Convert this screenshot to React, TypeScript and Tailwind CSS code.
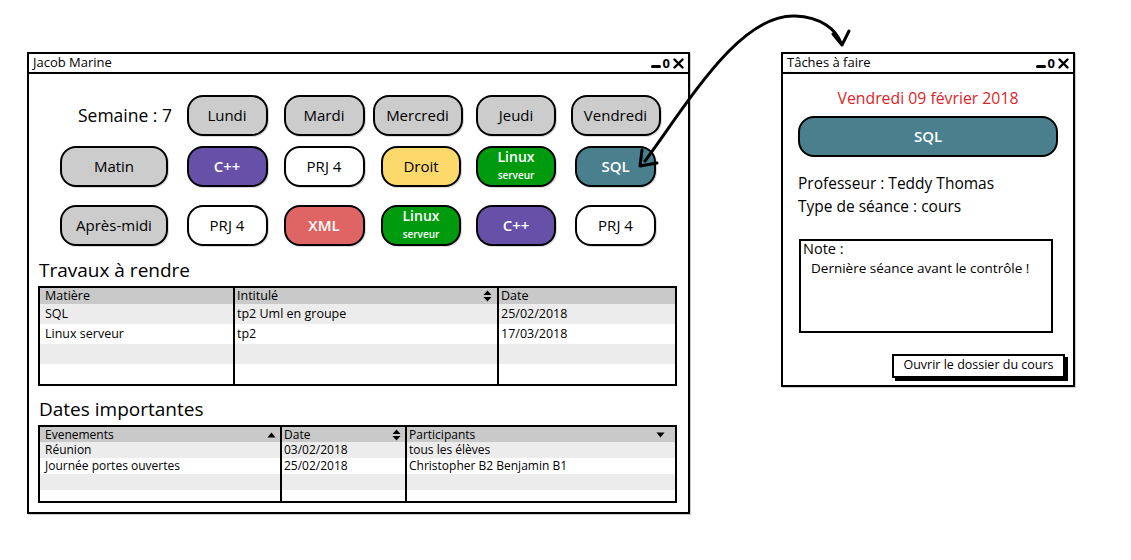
import React from "react";

const font = { fontFamily: "'Open Sans', 'Noto Sans', 'Liberation Sans', sans-serif" };

function WinControls() {
  return (
    <div className="flex items-end gap-[2px] pr-[4px] leading-none">
      <span className="block w-[10px] h-[3px] bg-black mb-[2px] rounded-sm" />
      <span className="text-[13px] font-bold">0</span>
      <svg width="11" height="11" viewBox="0 0 11 11" className="mb-[1px] ml-[1px]">
        <path d="M1.5 1.5 L9.5 9.5 M9.5 1.5 L1.5 9.5" stroke="black" strokeWidth="2.4" strokeLinecap="round" />
      </svg>
    </div>
  );
}

function Btn({ className, children }: { className: string; children: React.ReactNode }) {
  return (
    <div
      className={
        "h-[41px] rounded-[16px] border-2 border-black flex flex-col items-center justify-center leading-none shadow-[1px_1px_0_rgba(0,0,0,0.15)] " +
        className
      }
    >
      {children}
    </div>
  );
}

function Linux() {
  return (
    <Btn className="w-[80px] bg-[#009a0e] text-white">
      <span className="text-[14px] font-semibold -mt-[4px]">Linux</span>
      <span className="text-[10px] font-semibold mt-[6px]">serveur</span>
    </Btn>
  );
}

function Grid() {
  return (
    <div className="grid grid-cols-[110px_80px_80px_80px_80px_81px] gap-x-[17px] justify-items-center text-[15px]">
      {/* row 1 */}
      <div className="justify-self-stretch h-[41px] flex items-center justify-end text-[17.5px] -mr-[2px]">Semaine : 7</div>
      <Btn className="w-[81px] bg-[#cccccc]">Lundi</Btn>
      <Btn className="w-[81px] bg-[#cccccc]">Mardi</Btn>
      <Btn className="w-[90px] bg-[#cccccc] -ml-[7px]">Mercredi</Btn>
      <Btn className="w-[80px] bg-[#cccccc] -ml-[4px]">Jeudi</Btn>
      <Btn className="w-[90px] bg-[#cccccc]">Vendredi</Btn>
      {/* row 2 */}
      <div className="justify-self-start mt-[10px]"><Btn className="w-[108px] bg-[#cccccc]">Matin</Btn></div>
      <div className="mt-[10px]"><Btn className="w-[81px] bg-[#6750a8] text-white font-semibold">C++</Btn></div>
      <div className="mt-[10px]"><Btn className="w-[81px] bg-white">PRJ 4</Btn></div>
      <div className="mt-[10px]"><Btn className="w-[80px] bg-[#fdd86b]">Droit</Btn></div>
      <div className="mt-[10px] -ml-[4px]"><Linux /></div>
      <div className="mt-[10px]"><Btn className="w-[81px] bg-[#4a808e] text-white font-semibold">SQL</Btn></div>
      {/* row 3 */}
      <div className="justify-self-start mt-[18px]"><Btn className="w-[108px] bg-[#cccccc]">Après-midi</Btn></div>
      <div className="mt-[18px]"><Btn className="w-[81px] bg-white">PRJ 4</Btn></div>
      <div className="mt-[18px]"><Btn className="w-[81px] bg-[#df6565] text-white font-semibold">XML</Btn></div>
      <div className="mt-[18px]"><Linux /></div>
      <div className="mt-[18px] -ml-[4px]"><Btn className="w-[80px] bg-[#6750a8] text-white font-semibold">C++</Btn></div>
      <div className="mt-[18px]"><Btn className="w-[81px] bg-white">PRJ 4</Btn></div>
    </div>
  );
}

function UpDown() {
  return (
    <svg width="9" height="12" viewBox="0 0 9 12">
      <path d="M0.5 5 L4.5 0.5 L8.5 5 Z M0.5 7 L4.5 11.5 L8.5 7 Z" fill="black" />
    </svg>
  );
}
function Up() {
  return (
    <svg width="9" height="6" viewBox="0 0 9 6">
      <path d="M0.5 5.5 L4.5 0.5 L8.5 5.5 Z" fill="black" />
    </svg>
  );
}
function Down() {
  return (
    <svg width="9" height="6" viewBox="0 0 9 6">
      <path d="M0.5 0.5 L4.5 5.5 L8.5 0.5 Z" fill="black" />
    </svg>
  );
}

function Table1() {
  const rows = [
    ["SQL", "tp2 Uml en groupe", "25/02/2018"],
    ["Linux serveur", "tp2", "17/03/2018"],
    ["", "", ""],
    ["", "", ""],
  ];
  const cols = "grid grid-cols-[193px_264px_1fr]";
  return (
    <div className="w-[639px] h-[100px] border-2 border-black text-[12.5px] leading-none overflow-hidden">
      <div className={cols + " h-[16px] bg-[#c9c9c9]"}>
        <div className="pl-[5px] flex items-center">Matière</div>
        <div className="pl-[2px] pr-[5px] flex items-center justify-between border-l-2 border-black">
          <span>Intitulé</span>
          <UpDown />
        </div>
        <div className="pl-[2px] flex items-center border-l-2 border-black">Date</div>
      </div>
      {rows.map((r, i) => (
        <div key={i} className={cols + " h-[20px] " + (i % 2 === 0 ? "bg-[#ececec]" : "bg-white")}>
          <div className="pl-[5px] flex items-center">{r[0]}</div>
          <div className="pl-[2px] flex items-center border-l-2 border-black">{r[1]}</div>
          <div className="pl-[2px] flex items-center border-l-2 border-black">{r[2]}</div>
        </div>
      ))}
    </div>
  );
}

function Table2() {
  const rows = [
    ["Réunion", "03/02/2018", "tous les élèves"],
    ["Journée portes ouvertes", "25/02/2018", "Christopher B2 Benjamin B1"],
    ["", "", ""],
    ["", "", ""],
  ];
  const cols = "grid grid-cols-[240px_125px_1fr]";
  return (
    <div className="w-[639px] h-[78px] border-2 border-black text-[12px] leading-none overflow-hidden">
      <div className={cols + " h-[15px] bg-[#c9c9c9]"}>
        <div className="pl-[5px] pr-[4px] flex items-center justify-between">
          <span>Evenements</span>
          <Up />
        </div>
        <div className="pl-[2px] pr-[4px] flex items-center justify-between border-l-2 border-black">
          <span>Date</span>
          <UpDown />
        </div>
        <div className="pl-[2px] pr-[10px] flex items-center justify-between border-l-2 border-black">
          <span>Participants</span>
          <Down />
        </div>
      </div>
      {rows.map((r, i) => (
        <div key={i} className={cols + " h-[16px] " + (i % 2 === 0 ? "bg-[#ececec]" : "bg-white")}>
          <div className="pl-[5px] flex items-center">{r[0]}</div>
          <div className="pl-[2px] flex items-center border-l-2 border-black">{r[1]}</div>
          <div className="pl-[2px] flex items-center border-l-2 border-black">{r[2]}</div>
        </div>
      ))}
    </div>
  );
}

function MainWindow() {
  return (
    <div className="w-[663px] h-[462px] border-2 border-black bg-white flex flex-col shadow-[1px_1px_0_rgba(0,0,0,0.2)]">
      <div className="h-[20px] border-b-2 border-black flex items-center justify-between pl-[4px] text-[13px]">
        <span>Jacob Marine</span>
        <WinControls />
      </div>
      <div className="pl-[31px] pt-[21px]">
        <Grid />
      </div>
      <div className="pl-[10px] mt-[15px] text-[19px] leading-none">Travaux à rendre</div>
      <div className="pl-[9px] mt-[6px]">
        <Table1 />
      </div>
      <div className="pl-[10px] mt-[14px] text-[19px] leading-none">Dates importantes</div>
      <div className="pl-[9px] mt-[6px]">
        <Table2 />
      </div>
    </div>
  );
}

function SideWindow() {
  return (
    <div className="w-[294px] h-[335px] border-2 border-black bg-white flex flex-col shadow-[1px_1px_0_rgba(0,0,0,0.2)]">
      <div className="h-[20px] border-b-2 border-black flex items-center justify-between pl-[4px] text-[13px]">
        <span>Tâches à faire</span>
        <WinControls />
      </div>
      <div className="text-center text-[15.8px] text-[#d9262a] mt-[17px] leading-none">Vendredi 09 février 2018</div>
      <div className="pl-[15px] mt-[9px]">
        <div className="w-[260px] h-[41px] rounded-[16px] border-2 border-black bg-[#4a808e] text-white font-semibold text-[15px] flex items-center justify-center">
          SQL
        </div>
      </div>
      <div className="pl-[15px] mt-[19px] text-[15.5px] leading-none">Professeur : Teddy Thomas</div>
      <div className="pl-[15px] mt-[8px] text-[15.5px] leading-none">Type de séance : cours</div>
      <div className="ml-[16px] mt-[24px] w-[254px] h-[94px] border-2 border-black">
        <div className="pl-[2px] pt-[1px] text-[14.5px] leading-none">Note :</div>
        <div className="pl-[10px] mt-[6px] text-[13.5px] leading-none">Dernière séance avant le contrôle !</div>
      </div>
      <div className="flex justify-end pr-[8px] mt-[21px]">
        <div className="w-[173px] h-[24px] border-2 border-black bg-white shadow-[3px_3px_0_black] text-[12.5px] flex items-center justify-center">
          Ouvrir le dossier du cours
        </div>
      </div>
    </div>
  );
}

export default function App() {
  return (
    <div className="relative w-[1131px] h-[560px] bg-white text-black overflow-hidden" style={font}>
      <div className="flex pt-[52px] pl-[27px]">
        <MainWindow />
        <div className="ml-[91px]">
          <SideWindow />
        </div>
      </div>
      <svg className="absolute left-0 top-0 pointer-events-none" width="1131" height="560">
        <path d="M645 161 C 690 100, 740 14, 795 16 C 822 17, 836 30, 841 43" fill="none" stroke="black" strokeWidth="3" strokeLinecap="round" />
        <path d="M833 34 L842 45 L849 31" fill="none" stroke="black" strokeWidth="3" strokeLinecap="round" strokeLinejoin="round" />
        <path d="M642 150 L640 166 L657 163" fill="none" stroke="black" strokeWidth="3" strokeLinecap="round" strokeLinejoin="round" />
      </svg>
    </div>
  );
}
